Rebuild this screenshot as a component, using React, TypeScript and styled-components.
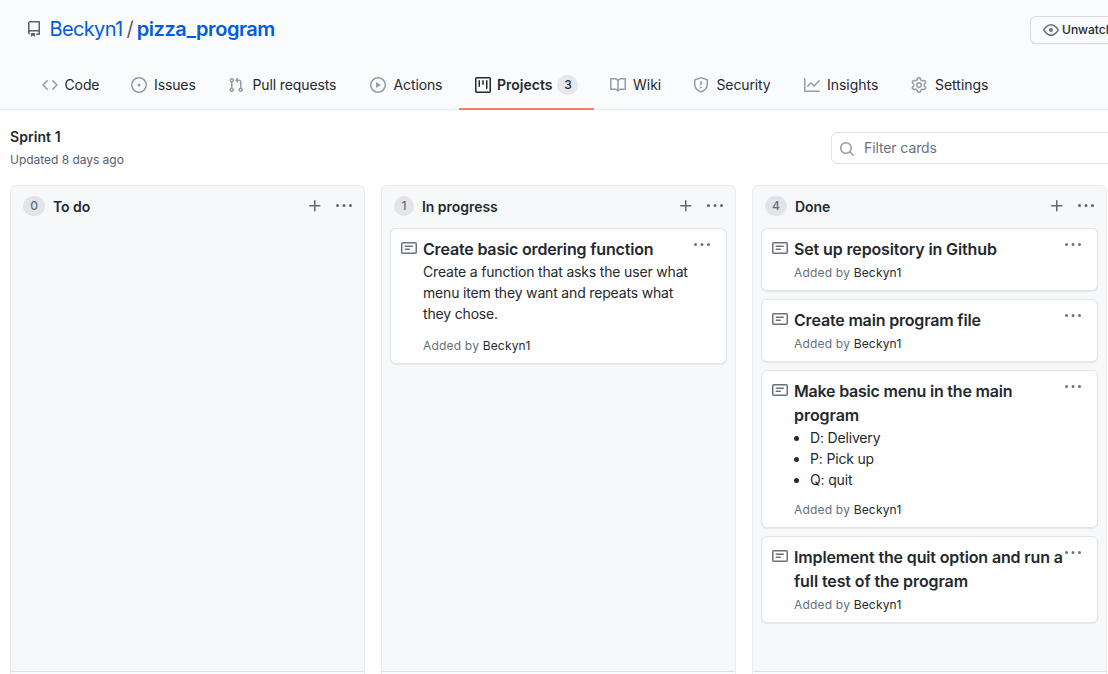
import React from "react";
import styled, { createGlobalStyle } from "styled-components";

const GlobalStyle = createGlobalStyle`
  *, *::before, *::after { box-sizing: border-box; }
  html, body { margin: 0; padding: 0; background: #fff; overflow: hidden; }
  body {
    font-family: Inter, "Liberation Sans", sans-serif;
    font-size: 14px;
    line-height: 21px;
    color: #24292e;
  }
  button, input { font: inherit; color: inherit; }
`;

const icons = {
  repo: "M2 2.5A2.5 2.5 0 014.5 0h8.75a.75.75 0 01.75.75v12.5a.75.75 0 01-.75.75h-2.5a.75.75 0 110-1.5h1.75v-2h-8a1 1 0 00-.714 1.7.75.75 0 01-1.072 1.05A2.495 2.495 0 012 11.5v-9zm10.5-1V9h-8c-.356 0-.694.074-1 .208V2.5a1 1 0 011-1h8zM5 12.25v3.25a.25.25 0 00.4.2l1.45-1.087a.25.25 0 01.3 0L8.6 15.7a.25.25 0 00.4-.2v-3.25a.25.25 0 00-.25-.25h-3.5a.25.25 0 00-.25.25z",
  code: "M4.72 3.22a.75.75 0 011.06 1.06L2.06 8l3.72 3.72a.75.75 0 11-1.06 1.06L.47 8.53a.75.75 0 010-1.06l4.25-4.25zm6.56 0a.75.75 0 10-1.06 1.06L13.94 8l-3.72 3.72a.75.75 0 101.06 1.06l4.25-4.25a.75.75 0 000-1.06l-4.25-4.25z",
  issue: "M8 9.5a1.5 1.5 0 100-3 1.5 1.5 0 000 3zM8 0a8 8 0 100 16A8 8 0 008 0zM1.5 8a6.5 6.5 0 1113 0 6.5 6.5 0 01-13 0z",
  pull: "M7.177 3.073L9.573.677A.25.25 0 0110 .854v4.792a.25.25 0 01-.427.177L7.177 3.427a.25.25 0 010-.354zM3.75 2.5a.75.75 0 100 1.5.75.75 0 000-1.5zm-2.25.75a2.25 2.25 0 113 2.122v5.256a2.251 2.251 0 11-1.5 0V5.372A2.25 2.25 0 011.5 3.25zM11 2.5h-1V4h1a1 1 0 011 1v5.628a2.251 2.251 0 101.5 0V5A2.5 2.5 0 0011 2.5zm1 10.25a.75.75 0 111.5 0 .75.75 0 01-1.5 0zM3.75 12a.75.75 0 100 1.5.75.75 0 000-1.5z",
  play: "M1.5 8a6.5 6.5 0 1113 0 6.5 6.5 0 01-13 0zM8 0a8 8 0 100 16A8 8 0 008 0zM6.379 5.227A.25.25 0 006 5.442v5.117a.25.25 0 00.379.214l4.264-2.559a.25.25 0 000-.428L6.379 5.227z",
  project: "M1.75 0A1.75 1.75 0 000 1.75v12.5C0 15.216.784 16 1.75 16h12.5A1.75 1.75 0 0016 14.25V1.75A1.75 1.75 0 0014.25 0H1.75zM1.5 1.75a.25.25 0 01.25-.25h12.5a.25.25 0 01.25.25v12.5a.25.25 0 01-.25.25H1.75a.25.25 0 01-.25-.25V1.75zM11.75 3a.75.75 0 00-.75.75v7.5a.75.75 0 001.5 0v-7.5a.75.75 0 00-.75-.75zm-8.25.75a.75.75 0 011.5 0v5.5a.75.75 0 01-1.5 0v-5.5zM8 3a.75.75 0 00-.75.75v3.5a.75.75 0 001.5 0v-3.5A.75.75 0 008 3z",
  book: "M0 1.75A.75.75 0 01.75 1h4.253c1.227 0 2.317.59 3 1.501A3.744 3.744 0 0111.006 1h4.245a.75.75 0 01.75.75v10.5a.75.75 0 01-.75.75h-4.507a2.25 2.25 0 00-1.591.659l-.622.621a.75.75 0 01-1.06 0l-.622-.621A2.25 2.25 0 005.258 13H.75a.75.75 0 01-.75-.75V1.75zm8.755 3a2.25 2.25 0 012.25-2.25H14.5v9h-3.757c-.71 0-1.4.201-1.992.572l.004-7.322zm-1.504 7.324l.004-5.073-.002-2.253A2.25 2.25 0 005.003 2.5H1.5v9h3.757a3.75 3.75 0 011.994.574z",
  shield: "M7.467.133a1.75 1.75 0 011.066 0l5.25 1.68A1.75 1.75 0 0115 3.48V7c0 1.566-.32 3.182-1.303 4.682-.983 1.498-2.585 2.813-5.032 3.855a1.7 1.7 0 01-1.33 0c-2.447-1.042-4.049-2.357-5.032-3.855C1.32 10.182 1 8.566 1 7V3.48a1.75 1.75 0 011.217-1.667l5.25-1.68zm.61 1.429a.25.25 0 00-.153 0l-5.25 1.68a.25.25 0 00-.174.238V7c0 1.358.275 2.666 1.057 3.86.784 1.194 2.121 2.34 4.366 3.297a.2.2 0 00.154 0c2.245-.956 3.582-2.104 4.366-3.298C13.225 9.666 13.5 8.36 13.5 7V3.48a.25.25 0 00-.174-.237l-5.25-1.68zM9 10.5a1 1 0 11-2 0 1 1 0 012 0zm-.25-5.75a.75.75 0 10-1.5 0v3a.75.75 0 001.5 0v-3z",
  graph: "M1.5 1.75a.75.75 0 00-1.5 0v12.5c0 .414.336.75.75.75h14.5a.75.75 0 000-1.5H1.5V1.75zm14.28 2.53a.75.75 0 00-1.06-1.06L10 7.94 7.53 5.47a.75.75 0 00-1.06 0L3.22 8.72a.75.75 0 001.06 1.06L7 7.06l2.47 2.47a.75.75 0 001.06 0l5.25-5.25z",
  gear: "M7.429 1.525a6.593 6.593 0 011.142 0c.036.003.108.036.137.146l.289 1.105c.147.56.55.967.997 1.189.174.086.341.183.501.29.417.278.97.423 1.53.27l1.102-.303c.11-.03.175.016.195.046.219.31.41.641.573.989.014.031.022.11-.059.19l-.815.806c-.411.406-.562.957-.53 1.456a4.588 4.588 0 010 .582c-.032.499.119 1.05.53 1.456l.815.806c.08.08.073.159.059.19a6.494 6.494 0 01-.573.99c-.02.029-.086.074-.195.045l-1.103-.303c-.559-.153-1.112-.008-1.529.27-.16.107-.327.204-.5.29-.449.222-.851.628-.998 1.189l-.289 1.105c-.029.11-.101.143-.137.146a6.613 6.613 0 01-1.142 0c-.036-.003-.108-.037-.137-.146l-.289-1.105c-.147-.56-.55-.967-.997-1.189a4.502 4.502 0 01-.501-.29c-.417-.278-.97-.423-1.53-.27l-1.102.303c-.11.03-.175-.016-.195-.046a6.492 6.492 0 01-.573-.989c-.014-.031-.022-.11.059-.19l.815-.806c.411-.406.562-.957.53-1.456a4.587 4.587 0 010-.582c.032-.499-.119-1.05-.53-1.456l-.815-.806c-.08-.08-.073-.159-.059-.19a6.44 6.44 0 01.573-.99c.02-.029.086-.075.195-.045l1.103.303c.559.153 1.112.008 1.529-.27.16-.107.327-.204.5-.29.449-.222.851-.628.998-1.189l.289-1.105c.029-.11.101-.143.137-.146zM8 0c-.236 0-.47.01-.701.03-.743.065-1.29.615-1.458 1.261l-.29 1.106c-.017.066-.078.158-.211.224a5.994 5.994 0 00-.668.386c-.123.082-.233.09-.3.071L3.27 2.776c-.644-.177-1.392.02-1.82.63a7.977 7.977 0 00-.704 1.217c-.315.675-.111 1.422.363 1.891l.815.806c.05.048.098.147.088.294a6.084 6.084 0 000 .772c.01.147-.038.246-.088.294l-.815.806c-.474.469-.678 1.216-.363 1.891.2.428.436.835.704 1.218.428.609 1.176.806 1.82.63l1.103-.303c.066-.019.176-.011.299.071.213.143.436.272.668.386.133.066.194.158.212.224l.289 1.106c.169.646.715 1.196 1.458 1.26a8.094 8.094 0 001.402 0c.743-.064 1.29-.614 1.458-1.26l.29-1.106c.017-.066.078-.158.211-.224a5.98 5.98 0 00.668-.386c.123-.082.233-.09.3-.071l1.102.302c.644.177 1.392-.02 1.82-.63.268-.382.505-.789.704-1.217.315-.675.111-1.422-.364-1.891l-.814-.806c-.05-.048-.098-.147-.088-.294a6.1 6.1 0 000-.772c-.01-.147.039-.246.088-.294l.814-.806c.475-.469.679-1.216.364-1.891a7.992 7.992 0 00-.704-1.218c-.428-.609-1.176-.806-1.82-.63l-1.103.303c-.066.019-.176.011-.299-.071a5.991 5.991 0 00-.668-.386c-.133-.066-.194-.158-.212-.224L10.16 1.29C9.99.645 9.444.095 8.701.031A8.094 8.094 0 008 0zm1.5 8a1.5 1.5 0 11-3 0 1.5 1.5 0 013 0zM11 8a3 3 0 11-6 0 3 3 0 016 0z",
  eye: "M1.679 7.932c.412-.621 1.242-1.75 2.366-2.717C5.175 4.242 6.527 3.5 8 3.5c1.473 0 2.824.742 3.955 1.715 1.124.967 1.954 2.096 2.366 2.717a.119.119 0 010 .136c-.412.621-1.242 1.75-2.366 2.717C10.825 11.758 9.473 12.5 8 12.5c-1.473 0-2.824-.742-3.955-1.715C2.92 9.818 2.09 8.69 1.679 8.068a.119.119 0 010-.136zM8 2c-1.981 0-3.67.992-4.933 2.078C1.797 5.169.88 6.423.43 7.1a1.619 1.619 0 000 1.798c.45.678 1.367 1.932 2.637 3.024C4.329 13.008 6.019 14 8 14c1.981 0 3.67-.992 4.933-2.078 1.27-1.091 2.187-2.345 2.637-3.023a1.619 1.619 0 000-1.798c-.45-.678-1.367-1.932-2.637-3.023C11.671 2.992 9.981 2 8 2zm0 8a2 2 0 100-4 2 2 0 000 4z",
  plus: "M7.75 2a.75.75 0 01.75.75V7h4.25a.75.75 0 110 1.5H8.5v4.25a.75.75 0 11-1.5 0V8.5H2.75a.75.75 0 010-1.5H7V2.75A.75.75 0 017.75 2z",
  kebab: "M8 9a1.5 1.5 0 100-3 1.5 1.5 0 000 3zM1.5 9a1.5 1.5 0 100-3 1.5 1.5 0 000 3zm13 0a1.5 1.5 0 100-3 1.5 1.5 0 000 3z",
  note: "M0 3.75C0 2.784.784 2 1.75 2h12.5c.966 0 1.75.784 1.75 1.75v8.5A1.75 1.75 0 0114.25 14H1.75A1.75 1.75 0 010 12.25v-8.5zm1.75-.25a.25.25 0 00-.25.25v8.5c0 .138.112.25.25.25h12.5a.25.25 0 00.25-.25v-8.5a.25.25 0 00-.25-.25H1.75zM3.5 6.25a.75.75 0 01.75-.75h7a.75.75 0 010 1.5h-7a.75.75 0 01-.75-.75zm.75 2.25a.75.75 0 000 1.5h4a.75.75 0 000-1.5h-4z",
};

const Svg = styled.svg`
  display: block;
  flex: none;
  fill: currentColor;
`;

function Icon({ name }: { name: keyof typeof icons }) {
  return (
    <Svg width="16" height="16" viewBox="0 0 16 16" aria-hidden="true">
      <path fillRule="evenodd" clipRule="evenodd" d={icons[name]} />
    </Svg>
  );
}

const Page = styled.div`
  width: 1108px;
  height: 674px;
  overflow: hidden;
  display: flex;
  flex-direction: column;
`;

const Header = styled.header`
  height: 110px;
  flex: none;
  background: #fafbfd;
  border-bottom: 1px solid #eaecef;
  display: flex;
  flex-direction: column;
  justify-content: space-between;
`;

const TitleRow = styled.div`
  display: flex;
  align-items: flex-start;
  justify-content: space-between;
  padding: 14px 0 0 26px;
`;

const RepoTitle = styled.h1`
  display: flex;
  align-items: center;
  margin: 0;
  height: 30px;
  font-size: 20px;
  font-weight: 400;
  line-height: 30px;
  color: #586069;
  white-space: nowrap;
`;

const Owner = styled.a`
  margin-left: 7.5px;
  color: #035cdc;
  letter-spacing: -0.65px;
`;

const Slash = styled.span`
  margin: 0 3px 0 4px;
`;

const RepoName = styled.a`
  color: #035cdc;
  font-weight: 600;
  letter-spacing: -0.43px;
`;

const WatchButton = styled.button`
  display: flex;
  align-items: center;
  gap: 3px;
  flex: none;
  width: 100px;
  height: 28px;
  margin: 2px -22px 0 0;
  padding: 0 12px;
  border: 1px solid rgba(27, 31, 35, 0.15);
  border-radius: 6px;
  background: #fafbfc;
  box-shadow: 0 1px 0 rgba(27, 31, 35, 0.04);
  font-size: 12px;
  font-weight: 500;
  line-height: 20px;
  white-space: nowrap;

  svg { color: #6a737d; }
`;

const Tabs = styled.nav`
  display: flex;
  padding-left: 26px;
  margin-bottom: -1px;
`;

const Tab = styled.a<{ $width: number; $gap?: number; $active?: boolean; $spacing?: number }>`
  display: flex;
  align-items: center;
  flex: none;
  width: ${(p) => p.$width}px;
  height: 49px;
  padding: 0 0 0 16px;
  gap: ${(p) => p.$gap ?? 7}px;
  border-bottom: 2px solid ${(p) => (p.$active ? "#fb7c64" : "transparent")};
  font-weight: ${(p) => (p.$active ? 600 : 400)};
  letter-spacing: ${(p) => p.$spacing ?? -0.12}px;
  white-space: nowrap;

  svg { color: ${(p) => (p.$active ? "#24292e" : "#959da5")}; }
`;

const TabCount = styled.span`
  width: 21px;
  height: 20px;
  margin-left: -1px;
  border-radius: 10px;
  background: #e6e8eb;
  font-size: 12px;
  font-weight: 500;
  line-height: 20px;
  text-align: center;
`;

const BoardHeader = styled.div`
  display: flex;
  justify-content: space-between;
  height: 75px;
  flex: none;
  padding: 16px 0 0 10px;
`;

const BoardName = styled.h2`
  margin: 0;
  font-size: 14px;
  font-weight: 600;
  line-height: 21px;
  letter-spacing: 0.06px;
`;

const Updated = styled.div`
  margin-top: 2px;
  font-size: 12px;
  letter-spacing: -0.03px;
  color: #586069;
`;

const Filter = styled.label`
  display: flex;
  align-items: center;
  gap: 9px;
  width: 300px;
  height: 32px;
  margin: 6px -23px 0 0;
  padding-left: 7px;
  border: 1px solid #e1e4e8;
  border-radius: 6px;
  color: #6a737d;
  letter-spacing: -0.1px;

  svg { color: #959da5; }
`;

const Placeholder = styled.span`
  margin-bottom: 2px;
`;

const Board = styled.main`
  display: flex;
  flex: 1;
  gap: 16px;
  padding-left: 10px;
`;

const Column = styled.section`
  display: flex;
  flex-direction: column;
  flex: none;
  width: 355px;
  border: 1px solid #eaecef;
  border-bottom: 0;
  border-radius: 6px 6px 0 0;
  background: #f6f8fa;
`;

const ColumnHeader = styled.div`
  display: flex;
  align-items: center;
  height: 42px;
  padding: 0 12px 2px;
`;

const ColumnCount = styled.span<{ $width: number }>`
  width: ${(p) => p.$width}px;
  height: 20px;
  margin: 0 8px 0 0;
  border-radius: 10px;
  background: #e1e4e9;
  color: #66707a;
  font-size: 12px;
  font-weight: 500;
  line-height: 20px;
  text-align: center;
`;

const ColumnTitle = styled.h3`
  flex: 1;
  margin: 0;
  font-size: 14px;
  font-weight: 600;
  line-height: 21px;
  letter-spacing: -0.04px;
`;

const ColumnActions = styled.div`
  display: flex;
  gap: 13px;
  color: #5f6973;
`;

const CardList = styled.div`
  display: flex;
  flex-direction: column;
  flex: 1;
  gap: 8px;
  padding: 0 8px;
`;

const ColumnFooter = styled.div`
  height: 3px;
  border-top: 1px solid #dfe2e5;
  background: #fafbfc;
`;

const CardBox = styled.article`
  display: flex;
  padding: 8px 16px 8px 10px;
  border: 1px solid #e1e4e8;
  border-radius: 6px;
  background: #fff;
  box-shadow: 0 1px 1px rgba(106, 115, 125, 0.12);
  color: #6a737d;
`;

const NoteMark = styled.span`
  flex: none;
  margin: 3px 6px 0 0;
`;

const CardBody = styled.div`
  flex: 1;
  min-width: 0;
  color: #24292e;
  letter-spacing: -0.17px;
  white-space: nowrap;
`;

const CardTitle = styled.h4`
  margin: 0;
  font-size: 16px;
  font-weight: 600;
  line-height: 24px;
`;

const CardText = styled.div`
  margin: 0 0 10px;
`;

const CardBullets = styled.ul`
  margin: 0 0 8px;
  padding-left: 16px;
`;

const AddedBy = styled.small`
  display: block;
  height: 21px;
  padding-top: 1px;
  font-size: 12px;
  line-height: 21px;
  letter-spacing: 0.19px;
  color: #66707b;

  a { color: #24292e; }
`;

type Line = { text: string; spacing?: number };
type CardData = { title: Line[]; text?: Line[]; bullets?: string[] };

const TextLine = styled.span<{ $spacing?: number }>`
  display: block;
  letter-spacing: ${(p) => (p.$spacing === undefined ? "inherit" : `${p.$spacing}px`)};
`;

const columns: { name: string; count: number; pill: number; cards: CardData[] }[] = [
  { name: "To do", count: 0, pill: 22, cards: [] },
  {
    name: "In progress",
    count: 1,
    pill: 20,
    cards: [
      {
        title: [{ text: "Create basic ordering function" }],
        text: [
          { text: "Create a function that asks the user what" },
          { text: "menu item they want and repeats what" },
          { text: "they chose." },
        ],
      },
    ],
  },
  {
    name: "Done",
    count: 4,
    pill: 22,
    cards: [
      { title: [{ text: "Set up repository in Github", spacing: -0.13 }] },
      { title: [{ text: "Create main program file" }] },
      {
        title: [{ text: "Make basic menu in the main", spacing: -0.21 }, { text: "program", spacing: -0.05 }],
        bullets: ["D: Delivery", "P: Pick up", "Q: quit"],
      },
      {
        title: [
          { text: "Implement the quit option and run a", spacing: -0.14 },
          { text: "full test of the program", spacing: -0.1 },
        ],
      },
    ],
  },
];

function Lines({ lines }: { lines: Line[] }) {
  return (
    <>
      {lines.map((l) => (
        <TextLine key={l.text} $spacing={l.spacing}>{l.text}</TextLine>
      ))}
    </>
  );
}

function Card({ card }: { card: CardData }) {
  return (
    <CardBox>
      <NoteMark><Icon name="note" /></NoteMark>
      <CardBody>
        <CardTitle><Lines lines={card.title} /></CardTitle>
        {card.text && <CardText><Lines lines={card.text} /></CardText>}
        {card.bullets && (
          <CardBullets>
            {card.bullets.map((b) => <li key={b}>{b}</li>)}
          </CardBullets>
        )}
        <AddedBy>Added by <a>Beckyn1</a></AddedBy>
      </CardBody>
      <Icon name="kebab" />
    </CardBox>
  );
}

export default function App() {
  return (
    <Page>
      <GlobalStyle />
      <Header>
        <TitleRow>
          <RepoTitle>
            <Icon name="repo" />
            <Owner>Beckyn1</Owner>
            <Slash>/</Slash>
            <RepoName>pizza_program</RepoName>
          </RepoTitle>
          <WatchButton><Icon name="eye" />Unwatch</WatchButton>
        </TitleRow>
        <Tabs>
          <Tab $width={89} $gap={6.5}><Icon name="code" />Code</Tab>
          <Tab $width={97}><Icon name="issue" />Issues</Tab>
          <Tab $width={142} $gap={8.5}><Icon name="pull" />Pull requests</Tab>
          <Tab $width={105} $gap={7.5}><Icon name="play" />Actions</Tab>
          <Tab $width={135} $gap={6} $spacing={0} $active><Icon name="project" />Projects<TabCount>3</TabCount></Tab>
          <Tab $width={83} $spacing={0}><Icon name="book" />Wiki</Tab>
          <Tab $width={111} $gap={7.5}><Icon name="shield" />Security</Tab>
          <Tab $width={107} $spacing={-0.02}><Icon name="graph" />Insights</Tab>
          <Tab $width={109} $gap={8} $spacing={-0.02}><Icon name="gear" />Settings</Tab>
        </Tabs>
      </Header>
      <BoardHeader>
        <div>
          <BoardName>Sprint 1</BoardName>
          <Updated>Updated 8 days ago</Updated>
        </div>
        <Filter>
          <Svg width="16" height="16" viewBox="0 0 16 16" aria-hidden="true">
            <path fillRule="evenodd" transform="translate(0 1)" d="M11.5 7a4.499 4.499 0 11-8.998 0A4.499 4.499 0 0111.5 7zm-.82 4.74a6 6 0 111.06-1.06l3.04 3.04a.75.75 0 11-1.06 1.06l-3.04-3.04z" />
          </Svg>
          <Placeholder>Filter cards</Placeholder>
        </Filter>
      </BoardHeader>
      <Board>
        {columns.map((c) => (
          <Column key={c.name}>
            <ColumnHeader>
              <ColumnCount $width={c.pill}>{c.count}</ColumnCount>
              <ColumnTitle>{c.name}</ColumnTitle>
              <ColumnActions><Icon name="plus" /><Icon name="kebab" /></ColumnActions>
            </ColumnHeader>
            <CardList>
              {c.cards.map((card) => <Card key={card.title[0].text} card={card} />)}
            </CardList>
            <ColumnFooter />
          </Column>
        ))}
      </Board>
    </Page>
  );
}
